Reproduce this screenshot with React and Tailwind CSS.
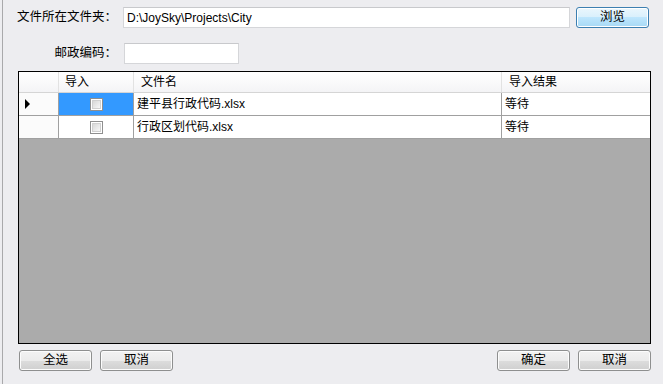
import React from "react";

const font = { fontFamily: '"Liberation Sans", "Noto Sans CJK SC", sans-serif' };

function Btn({ children, primary, className = "" }) {
  return (
    <div
      className={
        "h-[21px] w-[73px] rounded-[3px] border flex items-center justify-center text-[12.5px] text-black " +
        (primary
          ? "border-[#3c7fb1] bg-[linear-gradient(#eaf6fd_0%,#d9f0fc_50%,#bee6fd_50%,#a7d9f5_100%)] shadow-[inset_0_0_0_1px_#ffffff]"
          : "border-[#8e8f8f] bg-[linear-gradient(#f2f2f2_0%,#ebebeb_50%,#dddddd_50%,#cfcfcf_100%)] shadow-[inset_0_0_0_1px_#fcfcfc]") +
        " " +
        className
      }
    >
      {children}
    </div>
  );
}

function Check() {
  return (
    <div className="w-[13px] h-[13px] border border-[#8f8f8f] bg-white flex items-center justify-center">
      <div className="w-[9px] h-[9px] border border-[#d0d0d0] bg-[linear-gradient(135deg,#d8d8d8,#f7f7f7)]" />
    </div>
  );
}

export default function App() {
  const rows = [
    { name: "建平县行政代码.xlsx", res: "等待", sel: true },
    { name: "行政区划代码.xlsx", res: "等待", sel: false },
  ];
  return (
    <div style={font} className="w-[663px] h-[384px] bg-[#ededf0] text-[12px] text-black overflow-hidden">
      <div className="ml-[2px] h-full border-l border-[#a9a9ab] flex flex-col">
        {/* row 1 */}
        <div className="flex items-center mt-[7px] h-[21px]">
          <div className="w-[114px] text-right whitespace-nowrap text-[12.5px]">文件所在文件夹：</div>
          <div className="ml-[6px] w-[447px] h-[21px] border border-[#d5d6d9] border-t-[#c8c9cc] bg-white flex items-center pl-[3px]">
            D:\JoySky\Projects\City
          </div>
          <Btn primary className="ml-[6px]">浏览</Btn>
        </div>
        {/* row 2 */}
        <div className="flex items-center mt-[15px] h-[21px]">
          <div className="w-[114px] text-right whitespace-nowrap text-[12.5px]">邮政编码：</div>
          <div className="ml-[7px] w-[115px] h-[21px] border border-[#d5d6d9] border-t-[#c8c9cc] bg-white" />
        </div>
        {/* table */}
        <div className="ml-[15px] mt-[7px] w-[633px] h-[273px] border border-black bg-[#ababab] flex flex-col">
          <div className="flex h-[21px] bg-[linear-gradient(#ffffff,#f4f4f6)] border-b border-[#d5d5d5]">
            <div className="w-[40px] border-r border-[#e2e2e2]" />
            <div className="w-[75px] border-r border-[#e2e2e2] pl-[6px] flex items-center">导入</div>
            <div className="w-[368px] border-r border-[#e2e2e2] pl-[7px] flex items-center">文件名</div>
            <div className="flex-1 pl-[7px] flex items-center">导入结果</div>
          </div>
          {rows.map((r, i) => (
            <div key={i} className="flex h-[23px] bg-white border-b border-[#a0a0a0]">
              <div className="w-[40px] border-r border-[#a0a0a0] bg-[#fbfbfb] flex items-center pl-[6px]">
                {r.sel && (
                  <svg width="6" height="10" viewBox="0 0 6 10">
                    <path d="M0 0 L5 5 L0 10 Z" fill="#000" />
                  </svg>
                )}
              </div>
              <div
                className={
                  "w-[75px] border-r border-[#a0a0a0] flex items-center justify-center " +
                  (r.sel ? "bg-[#3399ff]" : "bg-white")
                }
              >
                <Check />
              </div>
              <div className="w-[368px] border-r border-[#a0a0a0] pl-[3px] flex items-center">{r.name}</div>
              <div className="flex-1 pl-[3px] flex items-center">{r.res}</div>
            </div>
          ))}
        </div>
        {/* bottom buttons */}
        <div className="flex mt-[6px] ml-[16px] w-[632px]">
          <Btn>全选</Btn>
          <Btn className="ml-[8px]">取消</Btn>
          <div className="flex-1" />
          <Btn>确定</Btn>
          <Btn className="ml-[8px]">取消</Btn>
        </div>
      </div>
    </div>
  );
}
